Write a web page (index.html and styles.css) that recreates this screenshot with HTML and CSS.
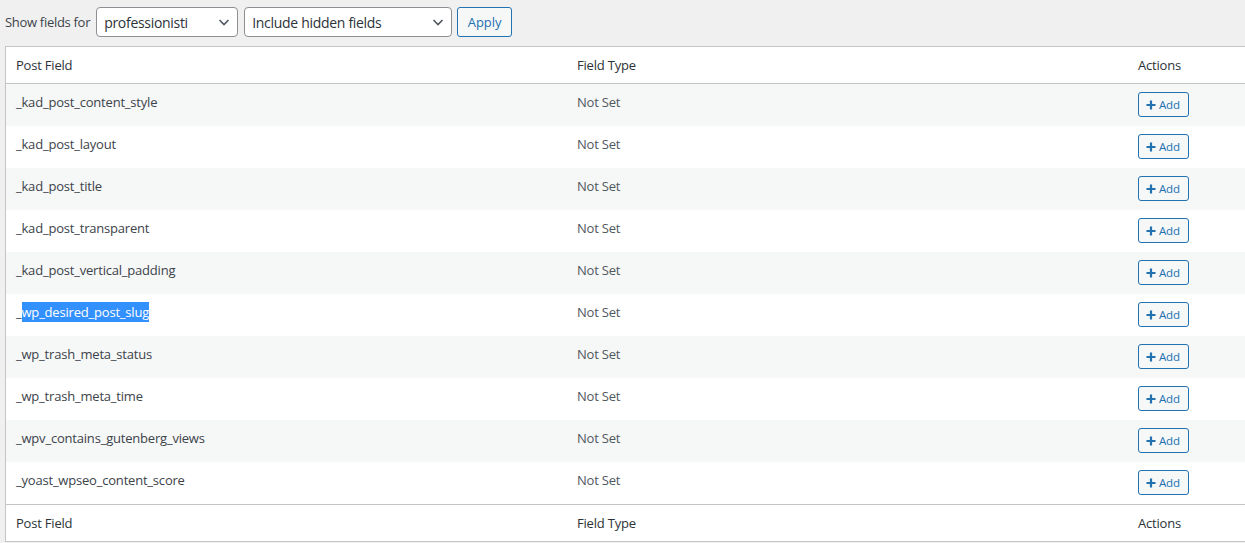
FILE: index.html
```html
<!DOCTYPE html>
<html lang="en">
<head>
  <meta charset="UTF-8" />
  <title>Post Fields</title>
  <link rel="stylesheet" href="styles.css">
</head>
<body>
  <div class="filters">
    <label class="filters-label" for="postType">Show fields for</label>
    <div class="select-wrap narrow">
      <select id="postType"><option>professionisti</option></select>
      <svg class="chevron" viewBox="0 0 16 16"><path d="M3.5 6l4.5 4.5L12.5 6" fill="none" stroke="#50575e" stroke-width="1.6"/></svg>
    </div>
    <div class="select-wrap wide">
      <select id="visibility"><option>Include hidden fields</option></select>
      <svg class="chevron" viewBox="0 0 16 16"><path d="M3.5 6l4.5 4.5L12.5 6" fill="none" stroke="#50575e" stroke-width="1.6"/></svg>
    </div>
    <button class="btn-apply">Apply</button>
  </div>

  <table class="fields">
    <thead>
      <tr><th class="col-name">Post Field</th><th class="col-type">Field Type</th><th class="col-actions">Actions</th></tr>
    </thead>
    <tbody id="rows"></tbody>
    <tfoot>
      <tr><th class="col-name">Post Field</th><th class="col-type">Field Type</th><th class="col-actions">Actions</th></tr>
    </tfoot>
  </table>

  <script>
    const fields = [
      "_kad_post_content_style",
      "_kad_post_layout",
      "_kad_post_title",
      "_kad_post_transparent",
      "_kad_post_vertical_padding",
      "_wp_desired_post_slug",
      "_wp_trash_meta_status",
      "_wp_trash_meta_time",
      "_wpv_contains_gutenberg_views",
      "_yoast_wpseo_content_score"
    ];
    const tbody = document.getElementById("rows");
    const plus = '<svg class="plus" viewBox="0 0 10 10"><path d="M5 0.5v9M0.5 5h9" stroke="#2271b1" stroke-width="2.2"/></svg>';
    fields.forEach(name => {
      const tr = document.createElement("tr");
      // the slug row shows a text selection from the user
      const label = name === "_wp_desired_post_slug"
        ? '_<span class="selected">' + name.slice(1) + '</span>'
        : name;
      tr.innerHTML =
        '<td class="field-name">' + label + '</td>' +
        '<td class="field-type">Not Set</td>' +
        '<td class="field-actions"><button class="btn-add">' + plus + 'Add</button></td>';
      tbody.appendChild(tr);
    });
  </script>
</body>
</html>
```

FILE: styles.css
```css
body {
  font-family: "Open Sans", "Noto Sans", sans-serif;
  margin: 0;
  background-color: #f0f0f1;
  color: #3c434a;
  overflow: hidden;
}
.filters {
  display: flex;
  align-items: center;
  padding: 7px 0 0 5px;
  height: 30px;
}
.filters-label {
  font-size: 13px;
  color: #3c434a;
  margin-right: 6px;
  letter-spacing: -0.3px;
}
.select-wrap {
  position: relative;
  height: 30px;
  margin-right: 6px;
}
.select-wrap.narrow { width: 142px; }
.select-wrap.wide { width: 208px; margin-right: 5px; }
.select-wrap select {
  appearance: none;
  width: 100%;
  height: 30px;
  border: 1px solid #8c8f94;
  border-radius: 4px;
  background: #fff;
  font-family: inherit;
  font-size: 14px;
  color: #2c3338;
  padding: 0 24px 0 7px;
  letter-spacing: -0.3px;
}
.chevron {
  position: absolute;
  right: 6px;
  top: 7px;
  width: 16px;
  height: 16px;
  pointer-events: none;
}
.btn-apply {
  height: 30px;
  width: 55px;
  border: 1px solid #2271b1;
  border-radius: 3px;
  background: #f6f7f7;
  color: #2271b1;
  font-family: inherit;
  font-size: 13px;
  padding: 0;
}
.fields {
  margin: 9px 0 0 5px;
  width: 1250px;
  border-collapse: collapse;
  border: 1px solid #c3c4c7;
  background: #fff;
  table-layout: fixed;
}
.fields th {
  text-align: left;
  font-weight: 400;
  font-size: 13px;
  color: #2c3338;
  height: 36px;
  padding: 0 10px;
  letter-spacing: -0.2px;
}
.fields thead tr { border-bottom: 1px solid #c3c4c7; }
.fields tfoot tr { border-top: 1px solid #c3c4c7; }
.col-name { width: 541px; }
.col-type { width: 541px; }
.fields td {
  height: 33px;
  padding: 9px 10px 0;
  font-size: 13px;
  line-height: 18px;
  vertical-align: top;
  letter-spacing: -0.2px;
}
.fields tbody tr:nth-child(odd) { background: #f6f7f7; }
.field-name {
  color: #3c434a;
  font-weight: 500;
}
.field-type {
  color: #50575e;
}
.selected {
  background: #3390ff;
  color: #fff;
  padding: 1px 0;
}
.btn-add {
  display: flex;
  align-items: center;
  gap: 3px;
  height: 25px;
  width: 51px;
  margin-top: -1px;
  padding: 0 0 0 7px;
  border: 1px solid #2271b1;
  border-radius: 3px;
  background: #f6f7f7;
  color: #2271b1;
  font-family: inherit;
  font-size: 11.5px;
  letter-spacing: -0.2px;
}
.plus {
  width: 10px;
  height: 10px;
}
```
